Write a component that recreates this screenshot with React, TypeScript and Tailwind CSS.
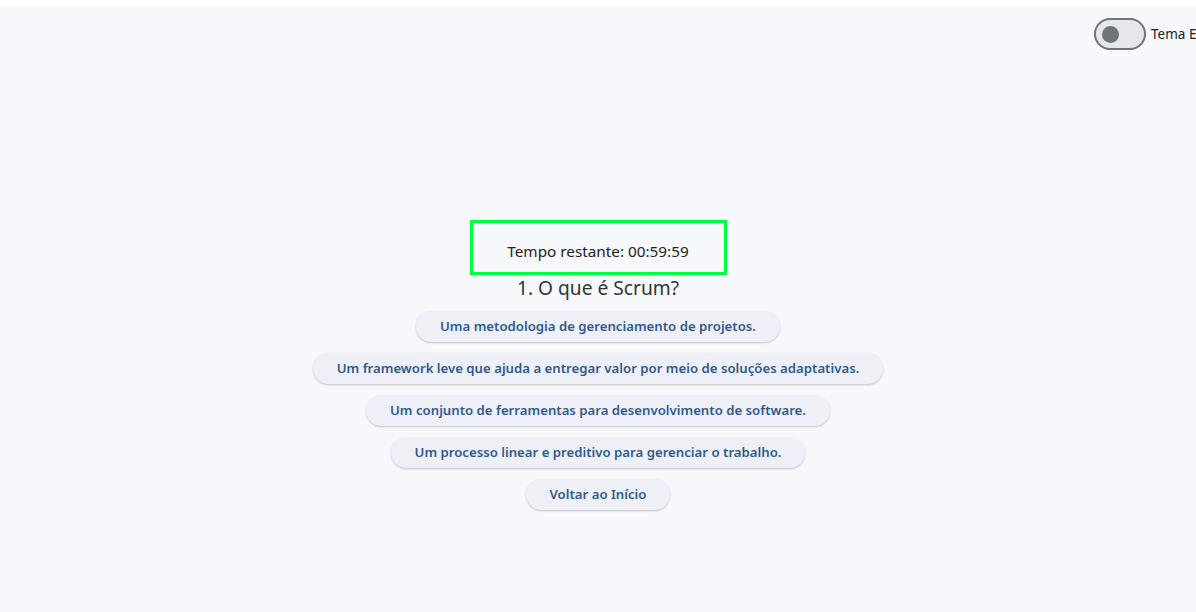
const options = [
  "Uma metodologia de gerenciamento de projetos.",
  "Um framework leve que ajuda a entregar valor por meio de soluções adaptativas.",
  "Um conjunto de ferramentas para desenvolvimento de software.",
  "Um processo linear e preditivo para gerenciar o trabalho.",
];

function QuizButton({ label }: { label: string }) {
  return (
    <button className="h-[31px] px-6 rounded-full bg-[#eff0f7] text-[#2f5a8e] text-[13.2px] font-semibold shadow-[0_1px_2px_rgba(0,0,0,0.22)] whitespace-nowrap">
      {label}
    </button>
  );
}

export default function App() {
  return (
    <div
      className="w-[1196px] h-[612px] overflow-hidden bg-white text-[#222]"
      style={{ fontFamily: '"Noto Sans", "Open Sans", sans-serif' }}
    >
      <div className="mt-[6px] h-[606px] bg-[#f7f8fc] flex flex-col overflow-hidden">
        {/* theme switch */}
        <div className="flex items-center pt-[12px] pl-[1094px] w-[1300px] whitespace-nowrap">
          <div className="w-[52px] h-[32px] rounded-full border-2 border-[#6f737a] bg-[#e6e7ec] flex items-center pl-[6px] shrink-0">
            <div className="w-[17px] h-[17px] rounded-full bg-[#6f737a]" />
          </div>
          <span className="ml-[5px] text-[13.5px] text-[#222]">Tema Escuro</span>
        </div>

        <div className="flex flex-col items-center mt-[170px]">
          <div className="w-[257px] h-[55px] border-[3px] border-[#00ff40] flex justify-center pt-[18px]">
            <p className="text-[15.3px] leading-[20px] text-[#222]">Tempo restante: 00:59:59</p>
          </div>
          <h2 className="text-[19.2px] leading-[26px] text-[#333]">1. O que é Scrum?</h2>
          <div className="flex flex-col items-center gap-[11px] mt-[10px]">
            {options.map((o) => (
              <QuizButton key={o} label={o} />
            ))}
            <QuizButton label="Voltar ao Início" />
          </div>
        </div>
      </div>
    </div>
  );
}
